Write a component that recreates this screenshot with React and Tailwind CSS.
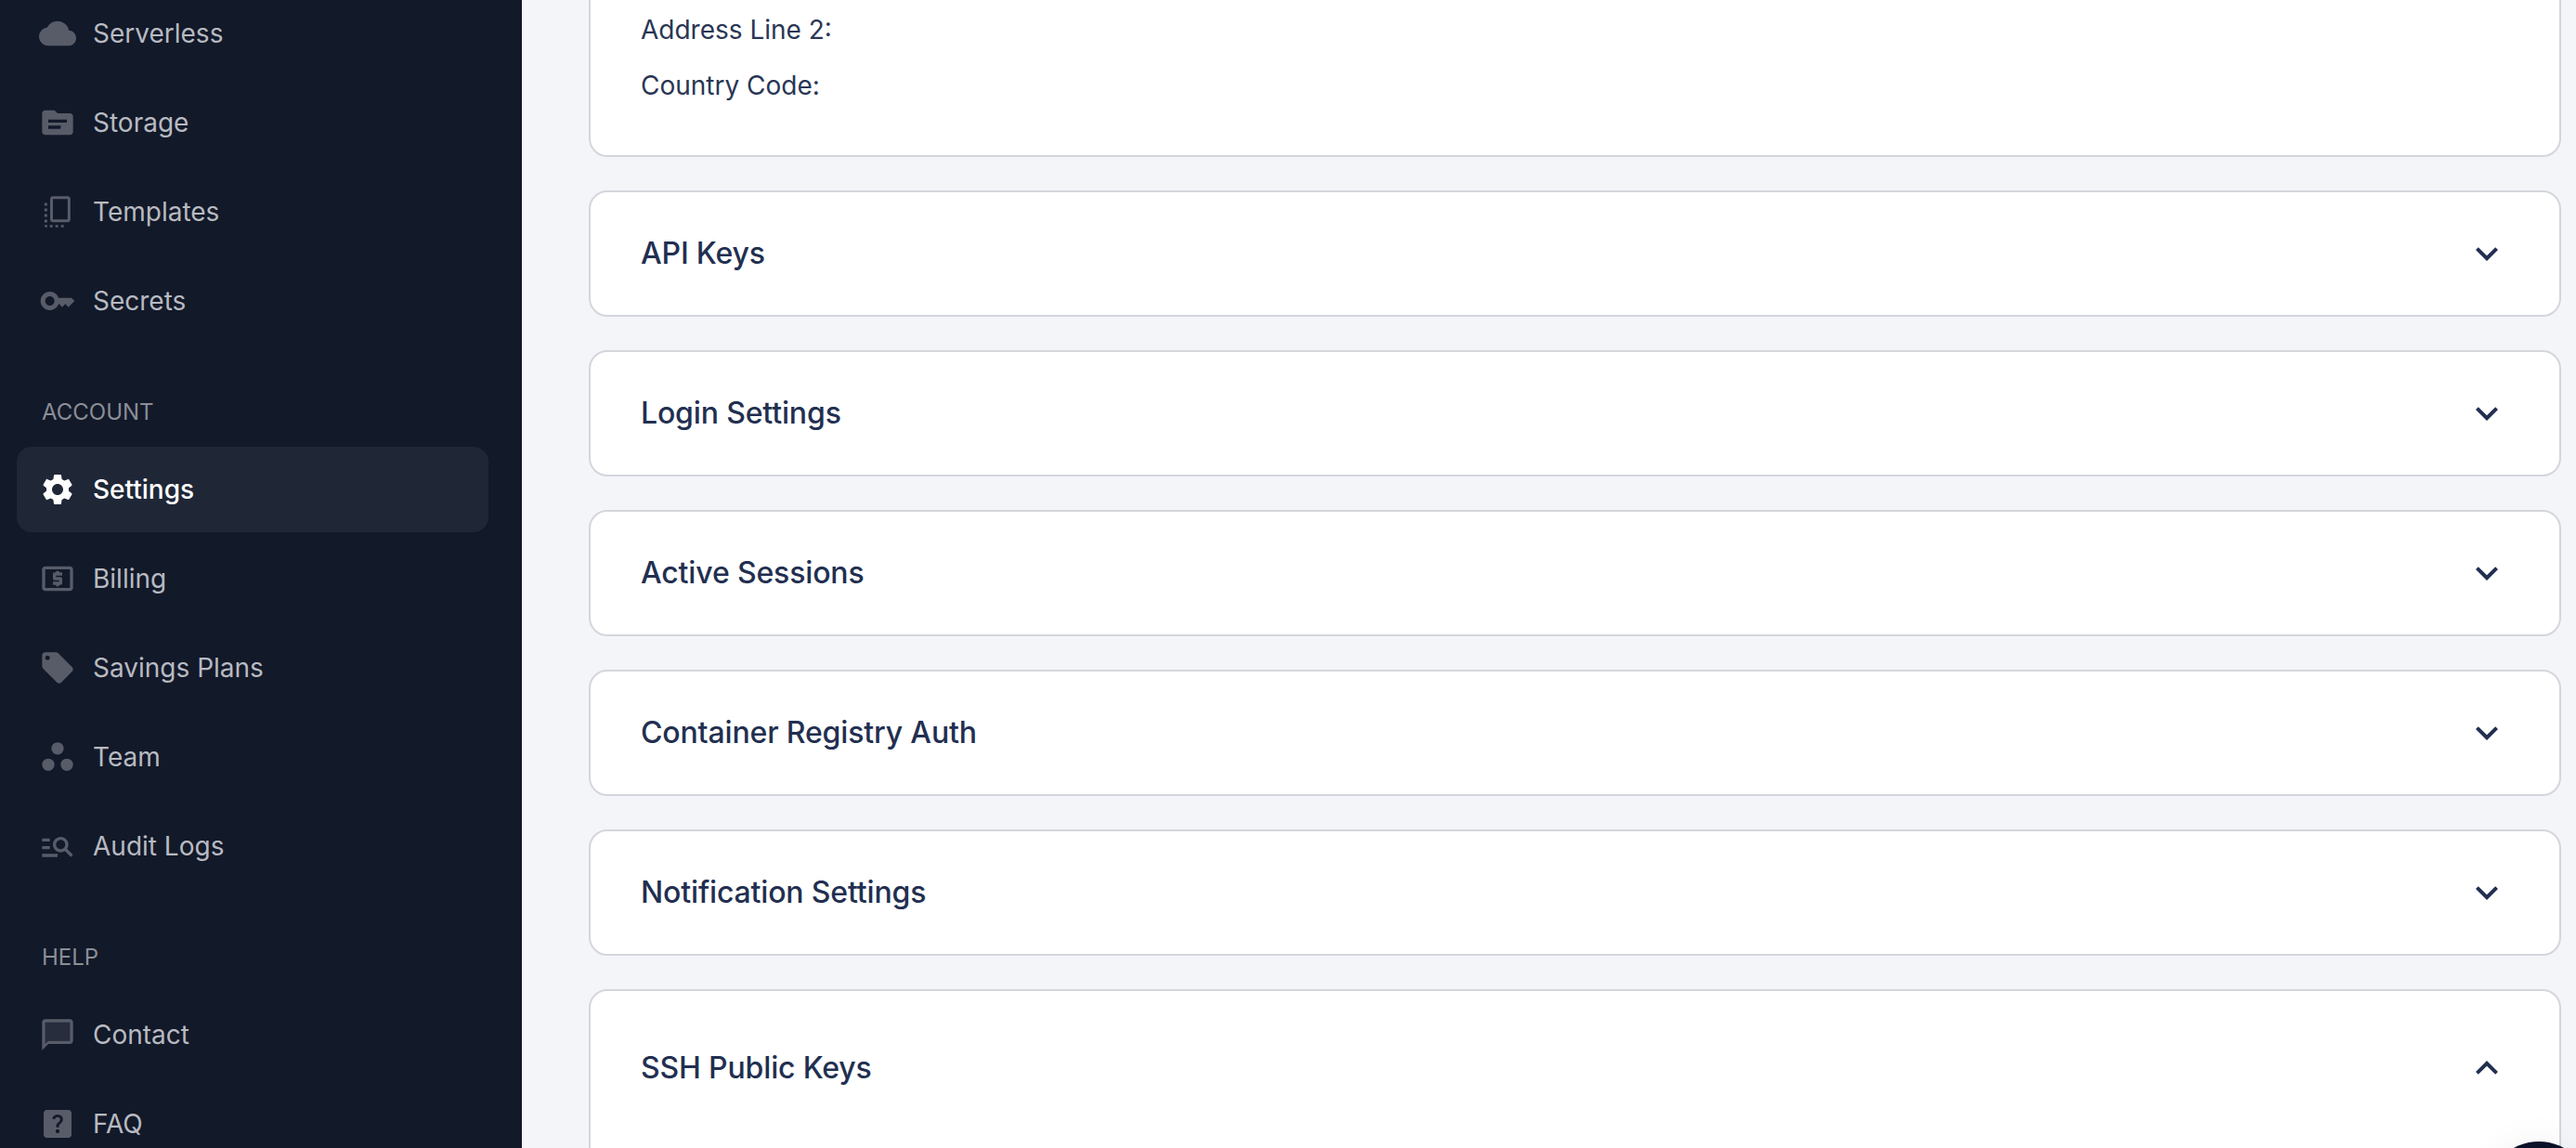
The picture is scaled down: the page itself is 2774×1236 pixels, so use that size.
const CloudIcon = (p) => (
  <svg viewBox="0 0 24 24" fill="currentColor" {...p}>
    <path d="M19.35 10.04A7.49 7.49 0 0 0 12 4C9.11 4 6.6 5.64 5.35 8.04A5.994 5.994 0 0 0 0 14c0 3.31 2.69 6 6 6h13c2.76 0 5-2.24 5-5 0-2.64-2.05-4.78-4.65-4.96z" />
  </svg>
);
const FolderIcon = (p) => (
  <svg viewBox="0 0 24 24" fill="currentColor" {...p}>
    <path d="M20 6h-8l-2-2H4c-1.1 0-2 .9-2 2v12c0 1.1.9 2 2 2h16c1.1 0 2-.9 2-2V8c0-1.1-.9-2-2-2zm-6 10H6v-2h8v2zm4-4H6v-2h12v2z" />
  </svg>
);
const TemplatesIcon = (p) => (
  <svg viewBox="0 0 24 24" fill="currentColor" {...p}>
    <path d="M9 2h9.500c1 0 1.800.8 1.800 1.800v13.200c0 1-.8 1.800-1.800 1.800H9c-1 0-1.800-.8-1.800-1.800V3.800C7.200 2.800 8 2 9 2zm0 1.800v13.200h9.500V3.800H9z" />
    <path d="M3.500 6.300h1.800v1.800H3.500zM3.500 9.900h1.800v1.800H3.500zM3.500 13.500h1.800v1.800H3.500zM3.500 17.100h1.800v1.800H3.500zM3.500 20.500h1.800v1.500H4.300c-.4 0-.8-.6-.8-1.500zM7 20.500h1.800V22H7zM10.600 20.500h1.800V22h-1.800zM14.200 20.500H16V22h-1.800z" />
  </svg>
);
const KeyIcon = (p) => (
  <svg viewBox="0 0 24 24" fill="currentColor" {...p}>
    <path d="M21 10h-8.350C11.830 7.670 9.610 6 7 6c-3.310 0-6 2.690-6 6s2.690 6 6 6c2.610 0 4.830-1.670 5.650-4H13l2 2 2-2 2 2 4-4.040L21 10zM7 15c-1.650 0-3-1.350-3-3s1.350-3 3-3 3 1.350 3 3-1.350 3-3 3z" />
  </svg>
);
const GearIcon = (p) => (
  <svg viewBox="0 0 24 24" fill="currentColor" {...p}>
    <path d="M19.14 12.94c.04-.3.06-.61.06-.94 0-.32-.02-.64-.07-.94l2.03-1.58a.49.49 0 0 0 .12-.61l-1.92-3.32a.488.488 0 0 0-.59-.22l-2.39.96c-.5-.38-1.03-.7-1.62-.94l-.36-2.54a.484.484 0 0 0-.48-.41h-3.84c-.24 0-.43.17-.47.41l-.36 2.54c-.59.24-1.13.57-1.62.94l-2.39-.96c-.22-.08-.47 0-.59.22L2.74 8.87c-.12.21-.08.47.12.61l2.03 1.58c-.05.3-.09.63-.09.94s.02.64.07.94l-2.03 1.58a.49.49 0 0 0-.12.61l1.92 3.32c.12.22.37.29.59.22l2.39-.96c.5.38 1.03.7 1.62.94l.36 2.54c.05.24.24.41.48.41h3.84c.24 0 .44-.17.47-.41l.36-2.54c.59-.24 1.13-.56 1.62-.94l2.39.96c.22.08.47 0 .59-.22l1.92-3.32c.12-.22.07-.47-.12-.61l-2.01-1.58zM12 15.6c-1.98 0-3.6-1.62-3.6-3.6s1.62-3.6 3.6-3.6 3.6 1.62 3.6 3.6-1.62 3.6-3.6 3.6z" />
  </svg>
);
const BillingIcon = (p) => (
  <svg viewBox="0 0 24 24" fill="currentColor" {...p}>
    <path d="M20 4H4c-1.11 0-2 .89-2 2v12c0 1.11.89 2 2 2h16c1.11 0 2-.89 2-2V6c0-1.11-.89-2-2-2zm0 14H4V6h16v12z" />
    <path d="M11 17h2v-1h1c.55 0 1-.45 1-1v-3c0-.55-.45-1-1-1h-3v-1h4V8h-2V7h-2v1h-1c-.55 0-1 .45-1 1v3c0 .55.45 1 1 1h3v1H9v2h2v1z" />
  </svg>
);
const TagIcon = (p) => (
  <svg viewBox="0 0 24 24" fill="currentColor" {...p}>
    <path d="M21.41 11.58l-9-9C12.05 2.22 11.55 2 11 2H4c-1.1 0-2 .9-2 2v7c0 .55.22 1.05.59 1.42l9 9c.36.36.86.58 1.41.58.55 0 1.05-.22 1.41-.59l7-7c.37-.36.59-.86.59-1.41 0-.55-.23-1.06-.59-1.42zM5.5 7C4.67 7 4 6.33 4 5.5S4.67 4 5.500 4 7 4.670 7 5.500 6.330 7 5.500 7z" />
  </svg>
);
const TeamIcon = (p) => (
  <svg viewBox="0 0 24 24" fill="currentColor" {...p}>
    <circle cx="12" cy="6.500" r="4" />
    <circle cx="6" cy="17" r="4" />
    <circle cx="18" cy="17" r="4" />
  </svg>
);
const AuditIcon = (p) => (
  <svg viewBox="0 0 24 24" fill="currentColor" {...p}>
    <path d="M7 9H2V7h5v2zm0 3H2v2h5v-2zm13.590 7-3.830-3.830c-.8.520-1.740.830-2.760.830-2.760 0-5-2.240-5-5s2.240-5 5-5 5 2.240 5 5c0 1.020-.310 1.960-.830 2.750L22 17.590 20.590 19zM17 11c0-1.650-1.350-3-3-3s-3 1.350-3 3 1.350 3 3 3 3-1.350 3-3zM2 19h10v-2H2v2z" />
  </svg>
);
const ChatIcon = (p) => (
  <svg viewBox="0 0 24 24" fill="currentColor" {...p}>
    <path d="M20 2H4c-1.1 0-2 .9-2 2v18l4-4h14c1.1 0 2-.9 2-2V4c0-1.1-.9-2-2-2zm0 14H6l-2 2V4h16v12z" />
    <path opacity=".3" d="M4 4h16v12H6l-2 2z" />
  </svg>
);
const HelpIcon = (p) => (
  <svg viewBox="0 0 24 24" fill="currentColor" {...p}>
    <path d="M19 3H5c-1.1 0-2 .9-2 2v14c0 1.1.9 2 2 2h14c1.1 0 2-.9 2-2V5c0-1.1-.9-2-2-2zm-6.990 15c-.7 0-1.260-.560-1.260-1.260 0-.710.560-1.250 1.260-1.250.710 0 1.250.540 1.250 1.250-.010.690-.540 1.260-1.250 1.260zm3.010-7.400c-.760 1.110-1.480 1.460-1.870 2.170-.160.290-.220.480-.220 1.410h-1.820c0-.490-.080-1.290.310-1.980.490-.870 1.420-1.390 1.960-2.160.570-.810.250-2.330-1.370-2.330-1.060 0-1.580.8-1.800 1.480l-1.650-.7C9.010 7.150 10.220 6 11.990 6c1.480 0 2.490.670 3.010 1.520.440.720.7 2.070.030 3.080z" />
  </svg>
);
const ExpandIcon = ({ up, ...p }) => (
  <svg viewBox="0 0 24 24" fill="currentColor" {...p}>
    <path d={up ? "M12 8l-6 6 1.410 1.410L12 10.830l4.590 4.580L18 14z" : "M16.590 8.590 12 13.170 7.410 8.590 6 10l6 6 6-6z"} />
  </svg>
);

const serviceItems = [
  { label: "Serverless", Icon: CloudIcon },
  { label: "Storage", Icon: FolderIcon },
  { label: "Templates", Icon: TemplatesIcon },
  { label: "Secrets", Icon: KeyIcon },
];
const accountItems = [
  { label: "Settings", Icon: GearIcon, active: true },
  { label: "Billing", Icon: BillingIcon },
  { label: "Savings Plans", Icon: TagIcon },
  { label: "Team", Icon: TeamIcon },
  { label: "Audit Logs", Icon: AuditIcon },
];
const helpItems = [
  { label: "Contact", Icon: ChatIcon },
  { label: "FAQ", Icon: HelpIcon },
];

const sections = ["API Keys", "Login Settings", "Active Sessions", "Container Registry Auth", "Notification Settings"];

function NavItem({ label, Icon, active }) {
  return (
    <div
      className={`flex h-[92px] items-center gap-[18px] rounded-2xl pl-[24px] text-[28px] ${
        active ? "bg-[#1f2737] text-white font-medium" : "text-[#b8bac1]"
      }`}
    >
      <Icon className={`h-10 w-10 shrink-0 ${active ? "text-white" : "text-[#585c69]"}`} />
      <span>{label}</span>
    </div>
  );
}

function NavLabel({ children }) {
  return <p className="mt-[56px] mb-[19px] pl-[27px] text-[24px] leading-9 text-[#8b8e97]">{children}</p>;
}

function Sidebar() {
  return (
    <aside className="-mt-[10px] h-[1400px] w-[562px] shrink-0 bg-[#121929] pl-[18px] pr-[36px]">
      <div className="flex flex-col gap-1">
        {serviceItems.map((item) => (
          <NavItem key={item.label} {...item} />
        ))}
      </div>
      <NavLabel>ACCOUNT</NavLabel>
      <div className="flex flex-col gap-1">
        {accountItems.map((item) => (
          <NavItem key={item.label} {...item} />
        ))}
      </div>
      <NavLabel>HELP</NavLabel>
      <div className="flex flex-col gap-1">
        {helpItems.map((item) => (
          <NavItem key={item.label} {...item} />
        ))}
      </div>
    </aside>
  );
}

function Section({ title, open }) {
  return (
    <div className={`rounded-[20px] border-2 border-[#d4d6dc] bg-white px-[54px] ${open ? "h-[300px] pt-[59px]" : "flex h-[136px] items-center"}`}>
      <div className="flex w-full items-center justify-between">
        <h2 className="text-[32px] font-medium leading-8 tracking-[-0.15px] text-[#222f50]">{title}</h2>
        <ExpandIcon up={open} className="h-12 w-12 text-[#222f50]" />
      </div>
    </div>
  );
}

export default function App() {
  return (
    <div className="relative flex h-[1236px] overflow-hidden bg-[#f3f5f9] font-['Inter',sans-serif]">
      <Sidebar />
      <main className="flex-1 pl-[72px] pr-[16px]">
        <div className="-mt-[39px] flex flex-col gap-9">
          <div className="h-[208px] rounded-[20px] border-2 border-[#d4d6dc] bg-white px-[54px] pt-[39px] text-[28px] leading-[60px] text-[#2a3654]">
            <p>Address Line 2:</p>
            <p>Country Code:</p>
          </div>
          {sections.map((title) => (
            <Section key={title} title={title} />
          ))}
          <Section title="SSH Public Keys" open />
        </div>
      </main>
      <div className="absolute top-[1229px] left-[2678px] h-[112px] w-[112px] rounded-full bg-[#0b1029] shadow-[0_0_40px_rgba(0,0,0,0.05)]" />
    </div>
  );
}
